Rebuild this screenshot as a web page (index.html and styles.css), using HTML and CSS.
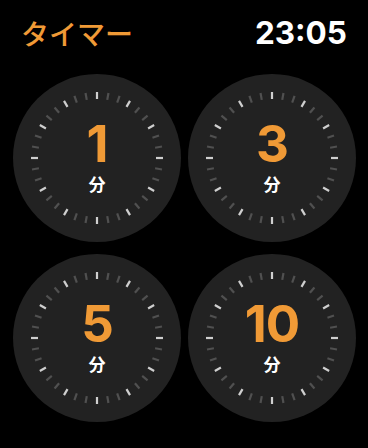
FILE: index.html
```html
<!DOCTYPE html>
<html lang="ja">
<head>
<meta charset="utf-8">
<link rel="stylesheet" href="styles.css">
</head>
<body>
<svg class="defs" width="0" height="0" aria-hidden="true">
  <defs>
    <g id="ticks" stroke-width="2.2">
      <g stroke="#cfcfcf">
        <line x1="84" y1="18" x2="84" y2="25" transform="rotate(0 84 84)"/>
        <line x1="84" y1="18" x2="84" y2="25" transform="rotate(30 84 84)"/>
        <line x1="84" y1="18" x2="84" y2="25" transform="rotate(60 84 84)"/>
        <line x1="84" y1="18" x2="84" y2="25" transform="rotate(90 84 84)"/>
        <line x1="84" y1="18" x2="84" y2="25" transform="rotate(120 84 84)"/>
        <line x1="84" y1="18" x2="84" y2="25" transform="rotate(150 84 84)"/>
        <line x1="84" y1="18" x2="84" y2="25" transform="rotate(180 84 84)"/>
        <line x1="84" y1="18" x2="84" y2="25" transform="rotate(210 84 84)"/>
        <line x1="84" y1="18" x2="84" y2="25" transform="rotate(240 84 84)"/>
        <line x1="84" y1="18" x2="84" y2="25" transform="rotate(270 84 84)"/>
        <line x1="84" y1="18" x2="84" y2="25" transform="rotate(300 84 84)"/>
        <line x1="84" y1="18" x2="84" y2="25" transform="rotate(330 84 84)"/>
      </g>
      <g stroke="#505050">
        <line x1="84" y1="18" x2="84" y2="25" transform="rotate(10 84 84)"/>
        <line x1="84" y1="18" x2="84" y2="25" transform="rotate(20 84 84)"/>
        <line x1="84" y1="18" x2="84" y2="25" transform="rotate(40 84 84)"/>
        <line x1="84" y1="18" x2="84" y2="25" transform="rotate(50 84 84)"/>
        <line x1="84" y1="18" x2="84" y2="25" transform="rotate(70 84 84)"/>
        <line x1="84" y1="18" x2="84" y2="25" transform="rotate(80 84 84)"/>
        <line x1="84" y1="18" x2="84" y2="25" transform="rotate(100 84 84)"/>
        <line x1="84" y1="18" x2="84" y2="25" transform="rotate(110 84 84)"/>
        <line x1="84" y1="18" x2="84" y2="25" transform="rotate(130 84 84)"/>
        <line x1="84" y1="18" x2="84" y2="25" transform="rotate(140 84 84)"/>
        <line x1="84" y1="18" x2="84" y2="25" transform="rotate(160 84 84)"/>
        <line x1="84" y1="18" x2="84" y2="25" transform="rotate(170 84 84)"/>
        <line x1="84" y1="18" x2="84" y2="25" transform="rotate(190 84 84)"/>
        <line x1="84" y1="18" x2="84" y2="25" transform="rotate(200 84 84)"/>
        <line x1="84" y1="18" x2="84" y2="25" transform="rotate(220 84 84)"/>
        <line x1="84" y1="18" x2="84" y2="25" transform="rotate(230 84 84)"/>
        <line x1="84" y1="18" x2="84" y2="25" transform="rotate(250 84 84)"/>
        <line x1="84" y1="18" x2="84" y2="25" transform="rotate(260 84 84)"/>
        <line x1="84" y1="18" x2="84" y2="25" transform="rotate(280 84 84)"/>
        <line x1="84" y1="18" x2="84" y2="25" transform="rotate(290 84 84)"/>
        <line x1="84" y1="18" x2="84" y2="25" transform="rotate(310 84 84)"/>
        <line x1="84" y1="18" x2="84" y2="25" transform="rotate(320 84 84)"/>
        <line x1="84" y1="18" x2="84" y2="25" transform="rotate(340 84 84)"/>
        <line x1="84" y1="18" x2="84" y2="25" transform="rotate(350 84 84)"/>
      </g>
    </g>
  </defs>
</svg>
<div class="screen">
  <header class="header">
    <span class="title">タイマー</span>
    <span class="clock">23:05</span>
  </header>
  <main class="grid">
    <div class="dial">
      <svg class="ticks" viewBox="0 0 168 168"><use href="#ticks"/></svg>
      <div class="label"><span class="num">1</span><span class="unit">分</span></div>
    </div>
    <div class="dial">
      <svg class="ticks" viewBox="0 0 168 168"><use href="#ticks"/></svg>
      <div class="label"><span class="num">3</span><span class="unit">分</span></div>
    </div>
    <div class="dial">
      <svg class="ticks" viewBox="0 0 168 168"><use href="#ticks"/></svg>
      <div class="label"><span class="num">5</span><span class="unit">分</span></div>
    </div>
    <div class="dial">
      <svg class="ticks" viewBox="0 0 168 168"><use href="#ticks"/></svg>
      <div class="label"><span class="num">10</span><span class="unit">分</span></div>
    </div>
  </main>
</div>
</body>
</html>
```
FILE: styles.css
```css
html, body {
  margin: 0;
  padding: 0;
  background: #000;
}
.defs {
  position: absolute;
  width: 0;
  height: 0;
}
.screen {
  width: 368px;
  height: 448px;
  background: #000;
  overflow: hidden;
}
.header {
  display: flex;
  justify-content: space-between;
  align-items: center;
  height: 34px;
  padding: 16px 21px 0 21px;
}
.title {
  color: #f09a36;
  font-family: "Noto Sans CJK JP", sans-serif;
  font-size: 28px;
  font-weight: 500;
  line-height: 34px;
}
.clock {
  color: #fff;
  font-family: "Inter", "Liberation Sans", sans-serif;
  font-size: 31.5px;
  font-weight: 700;
  line-height: 34px;
}
.grid {
  display: grid;
  grid-template-columns: 168px 168px;
  column-gap: 7px;
  row-gap: 12px;
  padding: 24px 0 0 13px;
}
.dial {
  position: relative;
  width: 168px;
  height: 168px;
  border-radius: 50%;
  background: #222222;
  display: flex;
  align-items: center;
  justify-content: center;
}
.ticks {
  position: absolute;
  inset: 0;
  width: 168px;
  height: 168px;
}
.label {
  position: relative;
  display: flex;
  flex-direction: column;
  align-items: center;
  gap: 9px;
}
.num {
  color: #f09a36;
  font-family: "Inter", "Liberation Sans", sans-serif;
  font-size: 51px;
  font-weight: 700;
  line-height: 44px;
  letter-spacing: -1px;
}
.unit {
  color: #fff;
  font-family: "DejaVu Sans", "Noto Sans CJK JP", sans-serif;
  font-size: 17px;
  font-weight: 700;
  line-height: 20px;
}
```
